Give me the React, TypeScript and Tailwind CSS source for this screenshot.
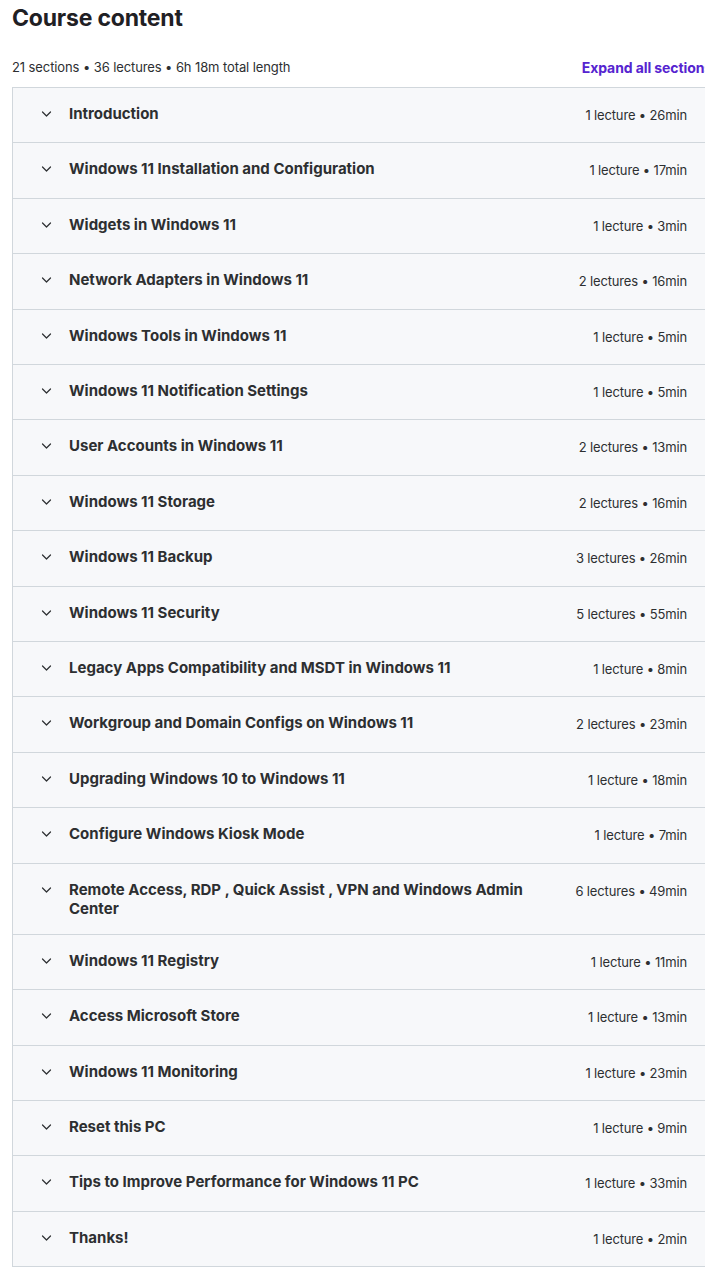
import React from "react";

type Section = { title: string; meta: string };

const sections: Section[] = [
  { title: "Introduction", meta: "1 lecture • 26min" },
  { title: "Windows 11 Installation and Configuration", meta: "1 lecture • 17min" },
  { title: "Widgets in Windows 11", meta: "1 lecture • 3min" },
  { title: "Network Adapters in Windows 11", meta: "2 lectures • 16min" },
  { title: "Windows Tools in Windows 11", meta: "1 lecture • 5min" },
  { title: "Windows 11 Notification Settings", meta: "1 lecture • 5min" },
  { title: "User Accounts in Windows 11", meta: "2 lectures • 13min" },
  { title: "Windows 11 Storage", meta: "2 lectures • 16min" },
  { title: "Windows 11 Backup", meta: "3 lectures • 26min" },
  { title: "Windows 11 Security", meta: "5 lectures • 55min" },
  { title: "Legacy Apps Compatibility and MSDT in Windows 11", meta: "1 lecture • 8min" },
  { title: "Workgroup and Domain Configs on Windows 11", meta: "2 lectures • 23min" },
  { title: "Upgrading Windows 10 to Windows 11", meta: "1 lecture • 18min" },
  { title: "Configure Windows Kiosk Mode", meta: "1 lecture • 7min" },
  { title: "Remote Access, RDP , Quick Assist , VPN and Windows Admin Center", meta: "6 lectures • 49min" },
  { title: "Windows 11 Registry", meta: "1 lecture • 11min" },
  { title: "Access Microsoft Store", meta: "1 lecture • 13min" },
  { title: "Windows 11 Monitoring", meta: "1 lecture • 23min" },
  { title: "Reset this PC", meta: "1 lecture • 9min" },
  { title: "Tips to Improve Performance for Windows 11 PC", meta: "1 lecture • 33min" },
  { title: "Thanks!", meta: "1 lecture • 2min" },
];

function Chevron() {
  return (
    <svg width="16" height="16" viewBox="0 0 16 16" fill="none" className="shrink-0 mt-[2px]">
      <path d="M5.5 6 L9.5 10 L13.5 6" stroke="#2d2f31" strokeWidth="1.2" strokeLinecap="round" strokeLinejoin="round" />
    </svg>
  );
}

export default function App() {
  return (
    <div className="w-[705px] overflow-hidden bg-white text-[#2d2f31] [font-family:Inter,'Liberation_Sans',sans-serif]">
      <div className="w-[700px] ml-3">
        <h2 className="text-[23px] leading-[36px] font-bold tracking-[-0.2px] text-[#1f2024]">Course content</h2>
        <div className="flex items-center justify-between mt-[21px] mb-[8px] h-[22px]">
          <span className="text-[13px] tracking-[-0.1px] text-[#2d2f31]">
            21 sections • 36 lectures • 6h 18m total length
          </span>
          <span className="text-[14px] font-bold text-[#5624d0] tracking-[-0.1px] -mt-[1px]">Expand all sections</span>
        </div>
        <div className="border border-[#d1d7dc] border-r-0">
          {sections.map((s, i) => (
            <div
              key={i}
              className={`flex items-start bg-[#f7f8fa] pl-6 pr-[25px] py-4 ${i > 0 ? "border-t border-[#d1d7dc]" : ""}`}
            >
              <div className="flex items-start gap-4 flex-1 min-w-0">
                <Chevron />
                <span className="text-[15px] leading-[19px] font-bold tracking-[0px] max-w-[475px]">
                  {s.title}
                </span>
              </div>
              <span className="text-[13px] leading-[22.4px] tracking-[-0.15px] whitespace-nowrap">{s.meta}</span>
            </div>
          ))}
        </div>
      </div>
    </div>
  );
}
